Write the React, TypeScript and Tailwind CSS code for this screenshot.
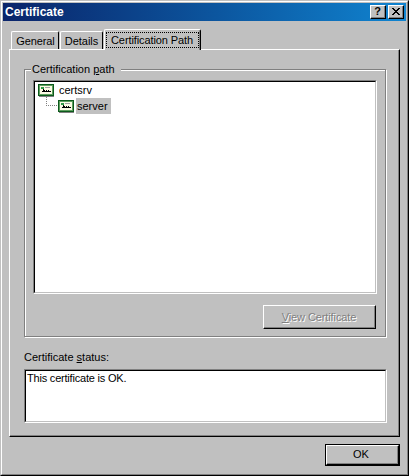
import type { ReactNode } from 'react'

// Win2000 style dialog: bevels are nested borders, as in the classic theme
const FONT = { fontFamily: '"Liberation Sans", Arial, sans-serif' }

function CertIcon() {
  return (
    <svg width="16" height="13" viewBox="0 0 16 13" shapeRendering="crispEdges" className="shrink-0">
      <rect x="0" y="0" width="16" height="12" fill="#0c5a1c" />
      <rect x="1" y="1" width="14" height="10" fill="#5f9f5f" />
      <rect x="2" y="2" width="12" height="8" fill="#fbfbe4" />
      <rect x="3" y="3" width="3" height="2" fill="#2f9a45" />
      <rect x="7" y="3" width="5" height="1" fill="#a0a0a0" />
      <path d="M5 5h1v1h1v1h1v-1h1v1h1v-1h1v1h2v1h-9v-1h1z" fill="#000" />
      <rect x="1" y="12" width="15" height="1" fill="#808080" />
    </svg>
  )
}

function Raised({ className, children }: { className: string; children: ReactNode }) {
  return (
    <div className={`border border-t-white border-l-white border-r-black border-b-black ${className}`}>
      <div className="flex h-full w-full items-center justify-center border-r border-b border-r-[#808080] border-b-[#808080]">
        {children}
      </div>
    </div>
  )
}

function Sunken({ className, children }: { className: string; children: ReactNode }) {
  return (
    <div className={`border border-t-[#808080] border-l-[#808080] border-r-white border-b-white ${className}`}>
      <div className="h-full w-full border border-t-black border-l-black border-r-[#c0c0c0] border-b-[#c0c0c0] bg-white">
        {children}
      </div>
    </div>
  )
}

function Tab({ label, className }: { label: string; className: string }) {
  return (
    <div
      className={`flex h-[18px] items-center justify-center rounded-t-[2px] border-t border-l border-r border-t-white border-l-white border-r-black pt-px ${className}`}
    >
      {label}
    </div>
  )
}

export default function App() {
  return (
    <div className="h-[476px] w-[409px] overflow-hidden bg-[#c0c0c0] text-[11px] leading-[13px] text-black" style={FONT}>
      <div className="h-full w-full border border-t-[#c0c0c0] border-l-[#c0c0c0] border-r-black border-b-black">
        <div className="h-full w-full border border-t-white border-l-white border-r-[#808080] border-b-[#808080] p-px">
          {/* Title bar */}
          <div className="flex h-[18px] items-center justify-between bg-gradient-to-r from-[#0a246a] to-[#1084d0] pr-[2px] pl-[2px]">
            <span className="text-[12px] font-bold text-white">Certificate</span>
            <div className="flex items-center">
              <Raised className="h-[14px] w-[16px] bg-[#c0c0c0]">
                <span className="text-[11px] leading-none font-bold">?</span>
              </Raised>
              <Raised className="ml-[2px] h-[14px] w-[16px] bg-[#c0c0c0]">
                <svg width="8" height="7" viewBox="0 0 8 7" shapeRendering="crispEdges">
                  <path d="M0 0h2v1h1v1h2v-1h1v-1h2v1h-1v1h-1v1h-1v1h1v1h1v1h1v1h-2v-1h-1v-1h-2v1h-1v1h-2v-1h1v-1h1v-1h1v-1h-1v-1h-1v-1h-1z" fill="#000" />
                </svg>
              </Raised>
            </div>
          </div>

          <div className="px-[6px]">
            {/* Tabs */}
            <div className="relative z-10 mt-[8px] -mb-px flex h-[21px] items-end pl-[2px]">
              <Tab label="General" className="mb-px w-[48px] pl-px tracking-[-0.1px]" />
              <Tab label="Details" className="mb-px ml-px w-[43px]" />
              <div className="ml-px flex h-[21px] w-[97px] items-start rounded-t-[2px] border-t border-l border-r border-t-white border-l-white border-r-black bg-[#c0c0c0] px-px pt-[2px] shadow-[inset_-1px_0_0_#808080]">
                <div className="flex h-[16px] w-[93px] items-center justify-center border border-dotted border-black pr-px tracking-[-0.1px]">
                  Certification Path
                </div>
              </div>
            </div>

            {/* Tab page */}
            <div className="h-[388px] w-[391px] border border-t-white border-l-white border-r-black border-b-black shadow-[inset_-1px_-1px_0_#808080]">
              <div className="px-[14px] pt-[19px]">
                <div className="relative h-[268px] w-[362px] border border-[#808080] px-[8px] pt-[10px] shadow-[inset_1px_1px_0_#fff,1px_1px_0_#fff]">
                  <span className="absolute -top-[7px] left-[6px] bg-[#c0c0c0] pr-[6px] pl-[1px]">
                    Certification <span className="underline">p</span>ath
                  </span>
                  <Sunken className="h-[214px] w-[344px]">
                    <div className="px-[3px] pt-[1px]">
                      <div className="flex h-[15px] items-center">
                        <CertIcon />
                        <span className="ml-[5px]">certsrv</span>
                      </div>
                      <div className="relative flex h-[16px] items-center pl-[20px]">
                        <div className="absolute top-[-2px] left-[8px] h-[10px] w-[11px] border-b border-l border-dotted border-[#808080]" />
                        <CertIcon />
                        <span className="ml-[2px] flex h-[16px] items-center bg-[#c0c0c0] pr-[3px] pl-px">server</span>
                      </div>
                    </div>
                  </Sunken>
                  <div className="mt-[11px] flex justify-end pr-[1px]">
                    <Raised className="h-[24px] w-[113px]">
                      <span className="pt-px tracking-[-0.1px] text-[#808080] [text-shadow:1px_1px_0_#fff]">
                        <span className="underline">V</span>iew Certificate
                      </span>
                    </Raised>
                  </div>
                </div>

                <div className="mt-[14px] h-[13px]">
                  Certificate <span className="underline">s</span>tatus:
                </div>
                <Sunken className="mt-[5px] h-[54px] w-[363px]">
                  <div className="px-px pt-px tracking-[-0.2px]">This certificate is OK.</div>
                </Sunken>
              </div>
            </div>

            {/* Footer */}
            <div className="mt-[7px] flex justify-end">
              <div className="h-[22px] w-[75px] border border-black">
                <Raised className="h-full w-full">
                  <span className="pr-[2px]">OK</span>
                </Raised>
              </div>
            </div>
          </div>
        </div>
      </div>
    </div>
  )
}
